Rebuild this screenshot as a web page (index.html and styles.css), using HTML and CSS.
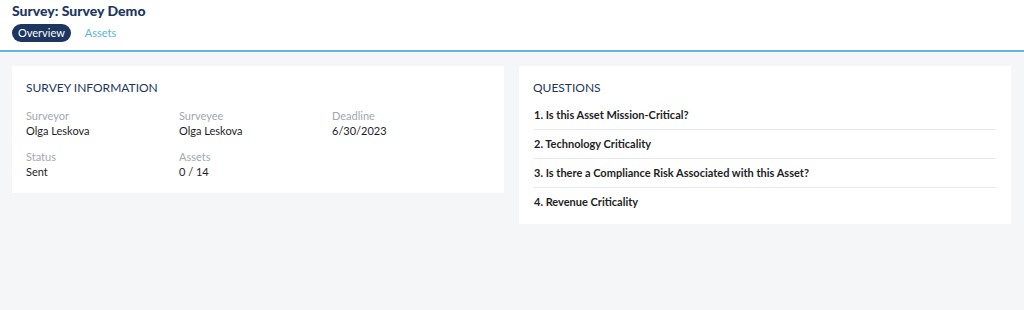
FILE: index.html
```html
<!DOCTYPE html>
<html lang="en">

<head>
    <meta charset="UTF-8">
    <meta name="viewport" content="width=device-width, initial-scale=1.0">
    <title>Survey: Survey Demo</title>
    <link rel="stylesheet" href="styles.css">
</head>

<body>

    <header class="page-header">
        <h1 class="page-title">Survey: Survey Demo</h1>
        <nav class="tabs">
            <a class="tab tab-active" href="#">Overview</a>
            <a class="tab" href="#">Assets</a>
        </nav>
    </header>

    <main class="content">
        <section class="card info-card">
            <h2 class="card-title">SURVEY INFORMATION</h2>
            <div class="info-grid">
                <div class="field">
                    <div class="field-label">Surveyor</div>
                    <div class="field-value">Olga Leskova</div>
                </div>
                <div class="field">
                    <div class="field-label">Surveyee</div>
                    <div class="field-value">Olga Leskova</div>
                </div>
                <div class="field">
                    <div class="field-label">Deadline</div>
                    <div class="field-value">6/30/2023</div>
                </div>
                <div class="field">
                    <div class="field-label">Status</div>
                    <div class="field-value">Sent</div>
                </div>
                <div class="field">
                    <div class="field-label">Assets</div>
                    <div class="field-value">0 / 14</div>
                </div>
            </div>
        </section>

        <section class="card questions-card">
            <h2 class="card-title">QUESTIONS</h2>
            <ul class="question-list">
                <li>1. Is this Asset Mission-Critical?</li>
                <li>2. Technology Criticality</li>
                <li>3. Is there a Compliance Risk Associated with this Asset?</li>
                <li>4. Revenue Criticality</li>
            </ul>
        </section>
    </main>

</body>

</html>
```

FILE: styles.css
```css
body {
    font-family: Lato, "Liberation Sans", sans-serif;
    margin: 0;
    padding: 0;
    background-color: #f5f6f8;
    color: #1e1e24;
}

.page-header {
    background-color: #fff;
    padding: 2px 12px 8px;
    border-bottom: 2px solid #62b6e0;
}

.page-title {
    margin: 0;
    font-size: 14px;
    font-weight: 900;
    color: #1d3660;
    line-height: 17px;
}

.tabs {
    display: flex;
    align-items: center;
    gap: 14px;
    margin-top: 5px;
}

.tab {
    font-size: 11px;
    text-decoration: none;
    color: #5ab4e0;
    line-height: 18px;
}

.tab-active {
    background-color: #1d3660;
    color: #fff;
    padding: 0 6px;
    border-radius: 10px;
}

.content {
    display: flex;
    align-items: flex-start;
    gap: 15px;
    padding: 14px 13px 0 12px;
}

.card {
    flex: 1;
    background-color: #fff;
    padding: 14px 14px 14px;
}

.card-title {
    margin: 0;
    font-size: 12px;
    font-weight: 400;
    color: #1d3660;
    line-height: 16px;
}

.info-grid {
    display: grid;
    grid-template-columns: 153px 153px 153px;
    row-gap: 11px;
    margin-top: 12px;
}

.field-label {
    font-size: 11px;
    color: #a3a8b0;
    line-height: 15px;
}

.field-value {
    font-size: 11px;
    color: #1e1e24;
    line-height: 15px;
}

.questions-card {
    padding-bottom: 8px;
}

.question-list {
    list-style-type: none;
    margin: 5px 0 0 1px;
    padding: 0 1px 0 0;
}

.question-list li {
    font-size: 11px;
    font-weight: 700;
    line-height: 14px;
    padding: 7px 0;
    border-bottom: 1px solid #e6eaee;
}

.question-list li:last-child {
    border-bottom: none;
}
```
